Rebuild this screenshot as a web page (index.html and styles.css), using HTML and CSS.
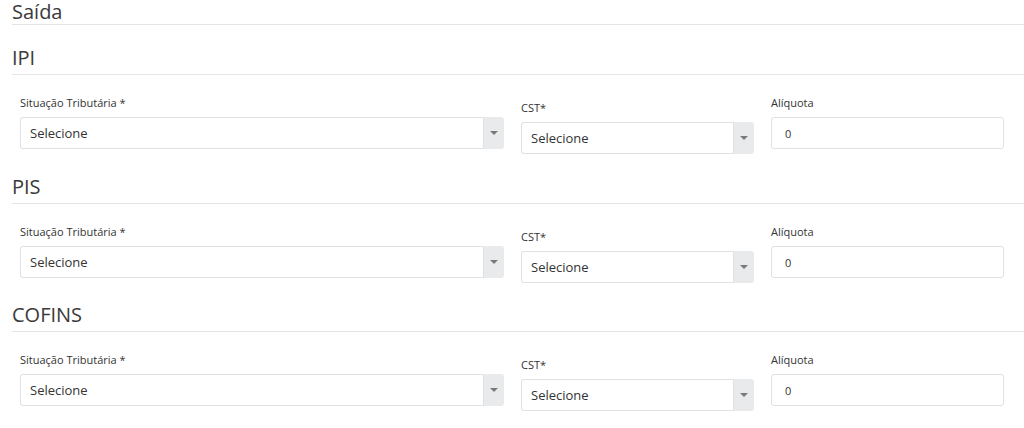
FILE: index.html
```html
<!DOCTYPE html>
<html>
<head>
    <title>Saída</title>
    <link rel="stylesheet" href="styles.css">
</head>
<body>
    <div class="page">
        <h2 class="page-title">Saída</h2>

        <div class="tax-section">
            <h3 class="section-title">IPI</h3>
            <div class="field-row">
                <div class="field">
                    <label>Situação Tributária *</label>
                    <div class="select-box"><span class="select-text">Selecione</span><span class="select-arrow"></span></div>
                </div>
                <div class="field field-cst">
                    <label>CST*</label>
                    <div class="select-box"><span class="select-text">Selecione</span><span class="select-arrow"></span></div>
                </div>
                <div class="field">
                    <label>Alíquota</label>
                    <input type="text" value="0">
                </div>
            </div>
        </div>

        <div class="tax-section">
            <h3 class="section-title">PIS</h3>
            <div class="field-row">
                <div class="field">
                    <label>Situação Tributária *</label>
                    <div class="select-box"><span class="select-text">Selecione</span><span class="select-arrow"></span></div>
                </div>
                <div class="field field-cst">
                    <label>CST*</label>
                    <div class="select-box"><span class="select-text">Selecione</span><span class="select-arrow"></span></div>
                </div>
                <div class="field">
                    <label>Alíquota</label>
                    <input type="text" value="0">
                </div>
            </div>
        </div>

        <div class="tax-section">
            <h3 class="section-title">COFINS</h3>
            <div class="field-row">
                <div class="field">
                    <label>Situação Tributária *</label>
                    <div class="select-box"><span class="select-text">Selecione</span><span class="select-arrow"></span></div>
                </div>
                <div class="field field-cst">
                    <label>CST*</label>
                    <div class="select-box"><span class="select-text">Selecione</span><span class="select-arrow"></span></div>
                </div>
                <div class="field">
                    <label>Alíquota</label>
                    <input type="text" value="0">
                </div>
            </div>
        </div>
    </div>
</body>
</html>
```

FILE: styles.css
```css
body {
    margin: 0;
    background: #fff;
    font-family: "Open Sans", "Liberation Sans", sans-serif;
    color: #333;
}
.page {
    padding-left: 12px;
}
.page-title,
.section-title {
    margin: 0;
    font-size: 20px;
    font-weight: normal;
    line-height: 22px;
    padding-bottom: 5px;
    border-bottom: 1px solid #e5e5e5;
    color: #3a3a3a;
}
.page-title {
    line-height: 24px;
    padding-bottom: 0;
}
.tax-section {
    padding-top: 22px;
}
.tax-section:last-child {
    padding-top: 21px;
}
.field-row {
    display: grid;
    grid-template-columns: 484px 233px 233px;
    column-gap: 17px;
    align-items: start;
    padding: 20px 0 0 8px;
}
.field-cst {
    margin-top: 5px;
}
label {
    display: block;
    font-size: 11px;
    line-height: 15px;
    margin-bottom: 7px;
    color: #333;
}
.select-box {
    display: flex;
    height: 32px;
    box-sizing: border-box;
    border-radius: 3px;
    background: #e9eaec;
}
.select-text {
    flex: 1;
    display: flex;
    align-items: center;
    padding-left: 9px;
    font-size: 13px;
    background: #fff;
    border: 1px solid #dfe1e4;
    border-radius: 3px 0 0 3px;
}
.select-arrow {
    width: 20px;
    display: flex;
    align-items: center;
    justify-content: center;
}
.select-arrow::after {
    content: "";
    border-left: 4px solid transparent;
    border-right: 4px solid transparent;
    border-top: 4px solid #7a7a7a;
}
input {
    display: block;
    width: 100%;
    height: 32px;
    box-sizing: border-box;
    padding: 0 13px;
    font-family: inherit;
    font-size: 11px;
    color: #333;
    border: 1px solid #dfe1e4;
    border-radius: 3px;
    outline: none;
}
```
